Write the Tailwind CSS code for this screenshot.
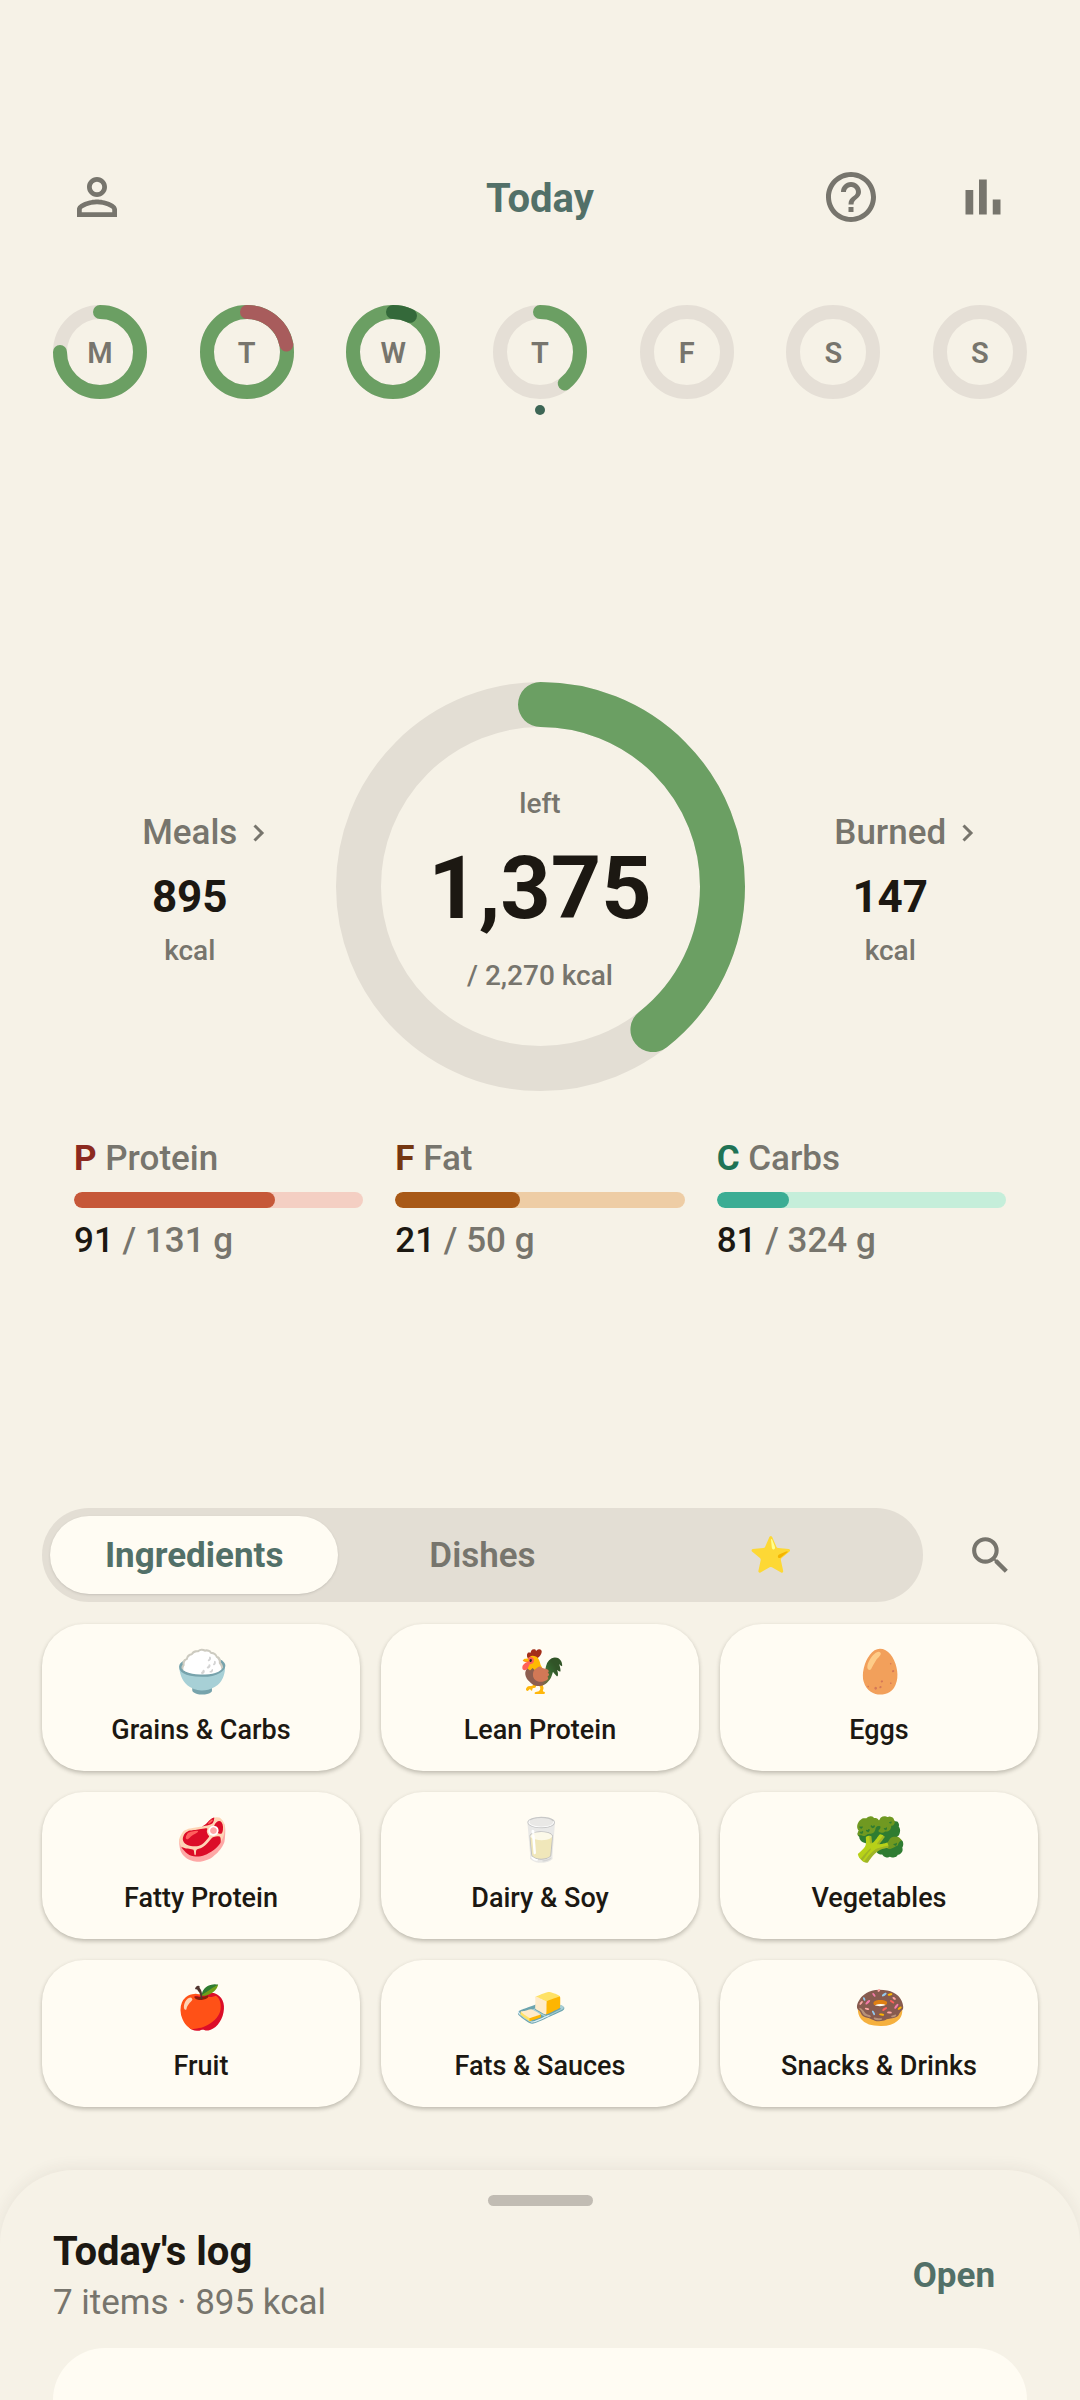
<!DOCTYPE html>
<html lang="en">
<head>
  <meta charset="UTF-8" />
  <meta name="viewport" content="width=device-width, initial-scale=1.0"/>
  <title>Today</title>
  <script src="https://cdn.jsdelivr.net/npm/@tailwindcss/browser@4"></script>
</head>
<body class="flex min-h-screen flex-col overflow-x-hidden bg-[#f6f2e7] font-['Roboto','Noto_Color_Emoji',sans-serif] text-[#1c1812]">

  <header class="mt-[149px] grid grid-cols-[1fr_auto_1fr] items-center px-[49px]">
    <button type="button" aria-label="Profile" class="flex h-24 w-24 items-center justify-center text-[#77756d]">
      <svg class="h-[60px] w-[60px]" viewBox="0 0 24 24" fill="currentColor"><path d="M12 5.9a2.1 2.1 0 1 1 0 4.2 2.1 2.1 0 0 1 0-4.2m0 9c2.970 0 6.100 1.460 6.100 2.100v1.100H5.900V17c0-.64 3.130-2.100 6.100-2.100M12 4C9.790 4 8 5.790 8 8s1.790 4 4 4 4-1.790 4-4-1.790-4-4-4m0 9c-2.670 0-8 1.340-8 4v3h16v-3c0-2.660-5.330-4-8-4"/></svg>
    </button>
    <h1 class="pt-1 text-[40px] leading-[48px] font-bold text-[#527068]">Today</h1>
    <div class="flex justify-end gap-9">
      <button type="button" aria-label="Help" class="flex h-24 w-24 items-center justify-center text-[#77756d]">
        <svg class="h-[60px] w-[60px]" viewBox="0 0 24 24" fill="currentColor"><path d="M11 18h2v-2h-2zm1-16C6.480 2 2 6.480 2 12s4.480 10 10 10 10-4.480 10-10S17.520 2 12 2m0 18c-4.410 0-8-3.590-8-8s3.590-8 8-8 8 3.590 8 8-3.590 8-8 8m0-14c-2.210 0-4 1.790-4 4h2c0-1.100.9-2 2-2s2 .9 2 2c0 2-3 1.750-3 5h2c0-2.250 3-2.500 3-5 0-2.210-1.790-4-4-4"/></svg>
      </button>
      <button type="button" aria-label="Statistics" class="flex h-24 w-24 items-center justify-center text-[#77756d]">
        <svg class="h-[60px] w-[60px]" viewBox="0 0 24 24" fill="currentColor"><path d="M5 9.200h3.100V19H5zM10.400 5h3.100v14h-3.100zM15.900 13H19v6h-3.100z"/></svg>
      </button>
    </div>
  </header>

  <nav id="days" aria-label="Week" class="mt-[60px] flex justify-between px-[53px]"></nav>

  <main class="flex flex-1 flex-col justify-center pt-6">
    <section class="flex items-center px-11">
      <div class="flex flex-1 flex-col items-center pt-2">
        <a href="#meals" class="flex items-center text-[35px] leading-[44px] font-medium text-[#77756d]">
          Meals
          <svg class="-mr-10 h-10 w-10" viewBox="0 0 24 24" fill="none" stroke="currentColor" stroke-width="1.8"><path d="M10.500 7.500L15 12l-4.500 4.500"/></svg>
        </a>
        <span class="mt-[14px] text-[44px] leading-[56px] font-bold">895</span>
        <span class="mt-[6px] text-[28px] leading-[40px] font-medium text-[#77756d]">kcal</span>
      </div>

      <div class="relative h-[409px] w-[409px]">
        <svg class="h-full w-full -rotate-90" viewBox="0 0 409 409" fill="none" stroke-width="45">
          <circle cx="204.5" cy="204.5" r="182" stroke="#e3ded4"/>
          <circle cx="204.5" cy="204.5" r="182" stroke="#6b9f63" stroke-linecap="round" pathLength="100" stroke-dasharray="39.4 100"/>
        </svg>
        <div class="absolute inset-0 flex flex-col items-center justify-center pt-[6px]">
          <span class="text-[28px] leading-[40px] font-medium text-[#77756d]">left</span>
          <span class="mt-2 text-[88px] leading-[112px] font-bold">1,375</span>
          <span class="mt-3 text-[28px] leading-[40px] font-medium text-[#77756d]">/ 2,270 kcal</span>
        </div>
      </div>

      <div class="flex flex-1 flex-col items-center pt-2">
        <a href="#burned" class="flex items-center text-[35px] leading-[44px] font-medium text-[#77756d]">
          Burned
          <svg class="-mr-10 h-10 w-10" viewBox="0 0 24 24" fill="none" stroke="currentColor" stroke-width="1.8"><path d="M10.500 7.500L15 12l-4.500 4.500"/></svg>
        </a>
        <span class="mt-[14px] text-[44px] leading-[56px] font-bold">147</span>
        <span class="mt-[6px] text-[28px] leading-[40px] font-medium text-[#77756d]">kcal</span>
      </div>
    </section>

    <section class="mt-[45px] grid grid-cols-3 gap-8 px-[74px] text-[35px] leading-[46px] font-medium text-[#77756d]">
      <div>
        <p><span class="font-bold text-[#8c2a20]">P</span> Protein</p>
        <div class="my-[10px] h-4 overflow-hidden rounded-full bg-[#f4cfc3]">
          <div class="h-full rounded-full bg-[#c65839]" style="width: 69.5%"></div>
        </div>
        <p><span class="text-[#1c1812]">91</span> / 131 g</p>
      </div>
      <div>
        <p><span class="font-bold text-[#753712]">F</span> Fat</p>
        <div class="my-[10px] h-4 overflow-hidden rounded-full bg-[#eecda5]">
          <div class="h-full rounded-full bg-[#a85917]" style="width: 43%"></div>
        </div>
        <p><span class="text-[#1c1812]">21</span> / 50 g</p>
      </div>
      <div>
        <p><span class="font-bold text-[#1f7355]">C</span> Carbs</p>
        <div class="my-[10px] h-4 overflow-hidden rounded-full bg-[#c5eeda]">
          <div class="h-full rounded-full bg-[#3bad94]" style="width: 25%"></div>
        </div>
        <p><span class="text-[#1c1812]">81</span> / 324 g</p>
      </div>
    </section>
  </main>

  <section class="px-[42px]">
    <div class="flex items-center gap-[19px]">
      <div class="grid flex-1 grid-cols-3 rounded-full bg-[#e3ded4] p-2 text-[35px] leading-[46px]">
        <button type="button" class="h-[78px] rounded-full bg-[#fffcf3] pt-[2px] font-bold text-[#527068] shadow-sm">Ingredients</button>
        <button type="button" class="h-[78px] rounded-full pt-[2px] font-semibold text-[#77756d]">Dishes</button>
        <button type="button" aria-label="Favourites" class="h-[78px] rounded-full pt-[2px]">⭐</button>
      </div>
      <button type="button" aria-label="Search" class="flex h-24 w-24 items-center justify-center text-[#77756d]">
        <svg class="h-[49px] w-[49px]" viewBox="0 0 24 24" fill="currentColor"><path d="M15.500 14h-.79l-.28-.27A6.470 6.470 0 0 0 16 9.500 6.500 6.500 0 1 0 9.500 16c1.610 0 3.090-.59 4.230-1.570l.27.28v.79l5 4.990L20.490 19zm-6 0C7.010 14 5 11.990 5 9.500S7.010 5 9.500 5 14 7.010 14 9.500 11.990 14 9.500 14"/></svg>
      </button>
    </div>
    <div id="categories" class="mt-[21px] grid grid-cols-3 gap-[21px]"></div>
  </section>

  <footer class="mt-[63px] rounded-t-[74px] bg-[#f6f2e7] px-[53px] pt-[25px] shadow-[0_-2px_16px_rgba(60,40,40,0.07)]">
    <div class="mx-auto h-[11px] w-[105px] rounded-full bg-[#c1bcb3]"></div>
    <div class="mt-5 flex items-center justify-between">
      <div>
        <h2 class="text-[40px] leading-[52px] font-bold">Today's log</h2>
        <p class="text-[35px] leading-[50px] text-[#77756d]">7 items · 895 kcal</p>
      </div>
      <button type="button" class="px-8 pb-[2px] text-[35px] leading-[44px] font-bold text-[#527068]">Open</button>
    </div>
    <div class="mt-5 h-[52px] rounded-t-[63px] bg-[#fffcf3]"></div>
  </footer>

  <script>
    const days = [
      { letter: "M", percent: 75 },
      { letter: "T", percent: 100, over: 22, overColor: "#a85c5c" },
      { letter: "W", percent: 100, over: 7, overColor: "#34693a" },
      { letter: "T", percent: 39.4, today: true },
      { letter: "F", percent: 0 },
      { letter: "S", percent: 0 },
      { letter: "S", percent: 0 }
    ];

    const categories = [
      ["🍚", "Grains & Carbs"],
      ["🐓", "Lean Protein"],
      ["🥚", "Eggs"],
      ["🥩", "Fatty Protein"],
      ["🥛", "Dairy & Soy"],
      ["🥦", "Vegetables"],
      ["🍎", "Fruit"],
      ["🧈", "Fats & Sauces"],
      ["🍩", "Snacks & Drinks"]
    ];

    function arc(percent, color) {
      if (!percent) return "";
      return `<circle cx="47" cy="47" r="40" stroke="${color}" stroke-linecap="round" pathLength="100" stroke-dasharray="${percent} 100"/>`;
    }

    document.getElementById("days").innerHTML = days.map(day => `
      <button type="button" class="flex flex-col items-center">
        <span class="relative flex h-[94px] w-[94px] items-center justify-center">
          <svg class="absolute inset-0 h-full w-full -rotate-90" viewBox="0 0 94 94" fill="none" stroke-width="14">
            <circle cx="47" cy="47" r="40" stroke="#e5dfd6"/>
            ${arc(day.percent, "#6b9f63")}
            ${arc(day.over, day.overColor)}
          </svg>
          <span class="relative pt-[2px] text-[29px] leading-[40px] font-semibold text-[#77756d]">${day.letter}</span>
        </span>
        <span class="mt-[6px] h-[10px] w-[10px] rounded-full ${day.today ? "bg-[#3d6655]" : ""}"></span>
      </button>`).join("");

    document.getElementById("categories").innerHTML = categories.map(([icon, name]) => `
      <button type="button" class="flex h-[147px] flex-col items-center rounded-[42px] bg-[#fffcf3] pt-5 shadow-[0_2px_4px_rgba(40,35,20,0.28)]">
        <span class="pl-1 text-[42px] leading-[56px]">${icon}</span>
        <span class="mt-3 text-[27px] leading-[36px] font-medium">${name.replace("&", "&amp;")}</span>
      </button>`).join("");
  </script>
</body>
</html>
